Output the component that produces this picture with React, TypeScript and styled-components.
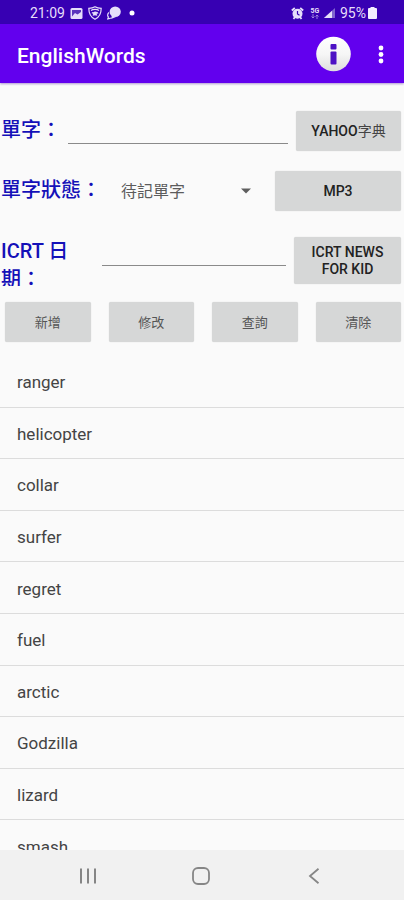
import React from "react";
import styled, { createGlobalStyle } from "styled-components";

const GlobalStyle = createGlobalStyle`
  *, *::before, *::after { box-sizing: border-box; }
  body {
    margin: 0;
    background: #fafafa;
    font-family: Roboto, "Noto Sans CJK TC", sans-serif;
  }
  button, input, select { font-family: inherit; }
`;

const Screen = styled.div`
  display: flex;
  flex-direction: column;
  height: 100vh;
  overflow: hidden;
  background: #fafafa;
`;

const StatusBar = styled.div`
  flex: none;
  display: flex;
  justify-content: space-between;
  align-items: center;
  height: 24px;
  padding: 2px 27px 0 30px;
  background: #3700b3;
  color: #e6defa;
  font-size: 14px;
  line-height: 20px;
`;

const StatusGroup = styled.div<{ $gap: number }>`
  display: flex;
  align-items: center;
  gap: ${(p) => p.$gap}px;
  svg { display: block; }
`;

const AppBar = styled.header`
  flex: none;
  display: flex;
  align-items: center;
  height: 59px;
  padding: 0 8px 0 17px;
  background: #6200ee;
  color: #fff;
  box-shadow: 0 1px 2px rgba(60, 0, 150, 0.4);
`;

const Title = styled.h1`
  flex: 1;
  margin: 0;
  padding-top: 4px;
  font-size: 21px;
  line-height: 28px;
  font-weight: 500;
`;

const IconButton = styled.button<{ $width: number }>`
  display: flex;
  align-items: center;
  justify-content: center;
  width: ${(p) => p.$width}px;
  height: 40px;
  padding: 0;
  border: 0;
  background: none;
  color: inherit;
  svg { display: block; }
`;

const Form = styled.form`
  flex: none;
  display: flex;
  flex-direction: column;
  padding: 28px 3px 0 1px;
`;

const FieldRow = styled.div<{ $space: number }>`
  display: flex;
  align-items: flex-start;
  margin-bottom: ${(p) => p.$space}px;
`;

const FieldLabel = styled.label<{ $width: number; $top: number }>`
  flex: none;
  width: ${(p) => p.$width}px;
  max-height: 49px;
  margin-top: ${(p) => p.$top}px;
  overflow: hidden;
  color: #1410b8;
  font-size: 20px;
  line-height: 28px;
  font-weight: 500;
`;

const TextBox = styled.input<{ $top: number }>`
  flex: 1;
  min-width: 0;
  height: 29px;
  margin-top: ${(p) => p.$top}px;
  margin-right: 8px;
  padding: 0 4px;
  border: 0;
  border-bottom: 1px solid #8a8a8a;
  background: transparent;
  color: #222;
  font-size: 16px;
  outline: none;
`;

const SelectWrap = styled.div`
  flex: 1;
  display: flex;
  align-items: center;
  min-width: 0;
  height: 40px;
  margin-right: 24px;
`;

const Select = styled.select`
  flex: 1;
  min-width: 0;
  height: 32px;
  padding: 0;
  border: 0;
  appearance: none;
  background: transparent;
  color: #5c5c5c;
  font-size: 16px;
  outline: none;
`;

const GreyButton = styled.button<{ $width?: number; $tall?: boolean; $muted?: boolean }>`
  flex: ${(p) => (p.$width ? "none" : "1")};
  width: ${(p) => (p.$width ? `${p.$width}px` : "auto")};
  height: ${(p) => (p.$tall ? 47 : 40)}px;
  padding: 0 8px;
  border: 0;
  border-radius: 2px;
  background: #d6d7d7;
  box-shadow: 0 0 1px rgba(0, 0, 0, 0.2);
  color: ${(p) => (p.$muted ? "#555" : "#222")};
  font-size: ${(p) => (p.$muted ? 13 : 14)}px;
  line-height: 17px;
  font-weight: ${(p) => (p.$muted ? 400 : 500)};
`;

const Thin = styled.span`
  font-weight: 400;
  color: #444;
`;

const Actions = styled.div`
  display: flex;
  gap: 18px;
  padding-left: 4px;
`;

const ListArea = styled.main`
  flex: 1;
  min-height: 0;
  margin-top: 14px;
  overflow: hidden;
`;

const WordList = styled.ul`
  display: grid;
  grid-auto-rows: 1fr;
  min-height: 516px;
  margin: 0;
  padding: 0;
  list-style: none;
`;

const Word = styled.li`
  display: flex;
  align-items: center;
  padding: 2px 17px 0;
  border-bottom: 1px solid #dcdcdc;
  color: #444;
  font-size: 17px;
  line-height: 24px;
`;

const NavBar = styled.nav`
  flex: none;
  display: flex;
  align-items: center;
  justify-content: space-around;
  height: 50px;
  padding: 2px 34px 0 31px;
  background: #f1f1f1;
  color: #868686;
`;

const words = ["ranger", "helicopter", "collar", "surfer", "regret", "fuel", "arctic", "Godzilla", "lizard", "smash"];
const actions = ["新增", "修改", "查詢", "清除"];

const PictureIcon = () => (
  <svg width="13" height="13" viewBox="0 0 13 13" aria-hidden="true">
    <rect x="0.5" y="1" width="12" height="11" rx="1.5" fill="#e6defa" />
    <path d="M2 9.500V3h9v2L7.500 7.500 5 6z" fill="#5a35bd" />
  </svg>
);

const ShieldIcon = () => (
  <svg width="14" height="14" viewBox="0 0 14 14" fill="none" stroke="#e6defa" aria-hidden="true">
    <path d="M7 .8C5 2 3 2.300.8 2.300.800 7 2 11 7 13.300 12 11 13.200 7 13.200 2.300 11 2.300 9 2 7 .8z" strokeWidth="1.200" />
    <path d="M3 4.500c2-1.500 6-1.500 8 0M4 6.500c2 2 4-2 6 1M5 9.500c1-1.500 3-1.500 4 0" strokeWidth="1.300" />
    <circle cx="7" cy="7.500" r="1.500" fill="#e6defa" />
  </svg>
);

const ChatIcon = () => (
  <svg width="15" height="14" viewBox="0 0 15 14" fill="#e6defa" aria-hidden="true">
    <ellipse cx="8.200" cy="5.800" rx="5.600" ry="5.300" />
    <path d="M5 9l-1 4 5-2z" />
    <path d="M2 6.500C.2 8 .4 10 1.400 11L.8 13l3-.8" fill="none" stroke="#e6defa" strokeWidth="1.200" />
  </svg>
);

const DotIcon = () => (
  <svg width="10" height="6" viewBox="0 0 10 6" aria-hidden="true">
    <circle cx="5" cy="3" r="2.500" fill="#fff" />
  </svg>
);

const AlarmIcon = () => (
  <svg width="13" height="13" viewBox="0 0 13 13" aria-hidden="true">
    <path d="M.8 3.500L3.800 1M12.200 3.500L9.200 1M2.500 12l1.500-2M10.500 12L9 10" stroke="#e6defa" strokeWidth="1.800" />
    <circle cx="6.500" cy="6.800" r="5" fill="#e6defa" />
    <path d="M6.500 4v3l2 1.200" fill="none" stroke="#3700b3" strokeWidth="1.200" />
  </svg>
);

const NetworkMark = styled.span`
  display: flex;
  flex-direction: column;
  align-items: center;
  width: 10px;
  margin-left: 2px;
  font-size: 7px;
  line-height: 6px;
  font-weight: 700;
`;

const Arrows = () => (
  <svg width="8" height="5" viewBox="0 0 8 5" fill="none" stroke="#a58be0" aria-hidden="true">
    <path d="M2 0v4M.5 2.500L2 4l1.500-1.500M6 5V1M4.500 2.500L6 1l1.500 1.500" strokeWidth=".9" />
  </svg>
);

const SignalIcon = () => (
  <svg width="12" height="12" viewBox="0 0 12 12" aria-hidden="true">
    <path d="M0 11L11 1v10z" fill="#8064cf" />
    <path d="M0 11l8-7.300V11z" fill="#e6defa" />
  </svg>
);

const BatteryIcon = () => (
  <svg width="9" height="12" viewBox="0 0 9 12" fill="#f2edff" aria-hidden="true">
    <path d="M2.500 0h4v1H8q1 0 1 1v9q0 1-1 1H1q-1 0-1-1V2q0-1 1-1h1.500z" />
  </svg>
);

const InfoIcon = () => (
  <svg width="36" height="36" viewBox="0 0 36 36" aria-hidden="true">
    <defs>
      <linearGradient id="disc" x1="0" y1="0" x2="0" y2="1">
        <stop offset="0" stopColor="#fff" />
        <stop offset="0.500" stopColor="#f6f6f6" />
        <stop offset="1" stopColor="#dedede" />
      </linearGradient>
    </defs>
    <circle cx="17.500" cy="18" r="17.300" fill="url(#disc)" />
    <rect x="14.500" y="8" width="6" height="5.500" rx="1" fill="#4d12c4" />
    <rect x="14.500" y="15.500" width="6" height="13" rx="1" fill="#4d12c4" />
  </svg>
);

const MoreIcon = () => (
  <svg width="6" height="20" viewBox="0 0 6 20" fill="#fff" aria-hidden="true">
    <circle cx="3" cy="4" r="2.400" />
    <circle cx="3" cy="10.500" r="2.400" />
    <circle cx="3" cy="17" r="2.400" />
  </svg>
);

const CaretIcon = () => (
  <svg width="10" height="6" viewBox="0 0 10 6" aria-hidden="true">
    <path d="M0 .5h10L5 5.500z" fill="#5e5e5e" />
  </svg>
);

const RecentsIcon = () => (
  <svg width="18" height="18" viewBox="0 0 18 18" stroke="currentColor" strokeWidth="2" aria-hidden="true">
    <path d="M2 1.500v15M9 1.500v15M16 1.500v15" />
  </svg>
);

const HomeIcon = () => (
  <svg width="20" height="20" viewBox="0 0 20 20" fill="none" stroke="currentColor" strokeWidth="1.800" aria-hidden="true">
    <rect x="2" y="2" width="16" height="16" rx="5" />
  </svg>
);

const BackIcon = () => (
  <svg width="12" height="18" viewBox="0 0 12 18" fill="none" stroke="currentColor" strokeWidth="1.800" aria-hidden="true">
    <path d="M10.500 1.800L2 9l8.500 7.200" />
  </svg>
);

export default function App() {
  return (
    <>
      <GlobalStyle />
      <Screen>
        <StatusBar>
          <StatusGroup $gap={5}>
            <span>21:09</span>
            <PictureIcon />
            <ShieldIcon />
            <ChatIcon />
            <DotIcon />
          </StatusGroup>
          <StatusGroup $gap={4}>
            <AlarmIcon />
            <NetworkMark>
              5G
              <Arrows />
            </NetworkMark>
            <SignalIcon />
            <StatusGroup $gap={2}>
              <span>95%</span>
              <BatteryIcon />
            </StatusGroup>
          </StatusGroup>
        </StatusBar>

        <AppBar>
          <Title>EnglishWords</Title>
          <IconButton type="button" aria-label="Info" $width={64}>
            <InfoIcon />
          </IconButton>
          <IconButton type="button" aria-label="More options" $width={30}>
            <MoreIcon />
          </IconButton>
        </AppBar>

        <Form onSubmit={(e) => e.preventDefault()}>
          <FieldRow $space={20}>
            <FieldLabel htmlFor="word" $width={67} $top={5}>單字：</FieldLabel>
            <TextBox id="word" type="text" $top={4} />
            <GreyButton type="button" $width={105}>
              YAHOO<Thin>字典</Thin>
            </GreyButton>
          </FieldRow>
          <FieldRow $space={26}>
            <FieldLabel htmlFor="state" $width={120} $top={5}>單字狀態：</FieldLabel>
            <SelectWrap>
              <Select id="state" defaultValue="待記單字">
                <option>待記單字</option>
              </Select>
              <CaretIcon />
            </SelectWrap>
            <GreyButton type="button" $width={126}>MP3</GreyButton>
          </FieldRow>
          <FieldRow $space={16}>
            <FieldLabel htmlFor="date" $width={101} $top={0}>
              ICRT 日<br />期：
            </FieldLabel>
            <TextBox id="date" type="text" $top={0} />
            <GreyButton type="button" $width={107} $tall>
              ICRT NEWS FOR KID
            </GreyButton>
          </FieldRow>
          <Actions>
            {actions.map((a) => (
              <GreyButton key={a} type="button" $muted>{a}</GreyButton>
            ))}
          </Actions>
        </Form>

        <ListArea>
          <WordList>
            {words.map((w) => (
              <Word key={w}>{w}</Word>
            ))}
          </WordList>
        </ListArea>

        <NavBar>
          <IconButton type="button" aria-label="Recent apps" $width={48}>
            <RecentsIcon />
          </IconButton>
          <IconButton type="button" aria-label="Home" $width={48}>
            <HomeIcon />
          </IconButton>
          <IconButton type="button" aria-label="Back" $width={48}>
            <BackIcon />
          </IconButton>
        </NavBar>
      </Screen>
    </>
  );
}
